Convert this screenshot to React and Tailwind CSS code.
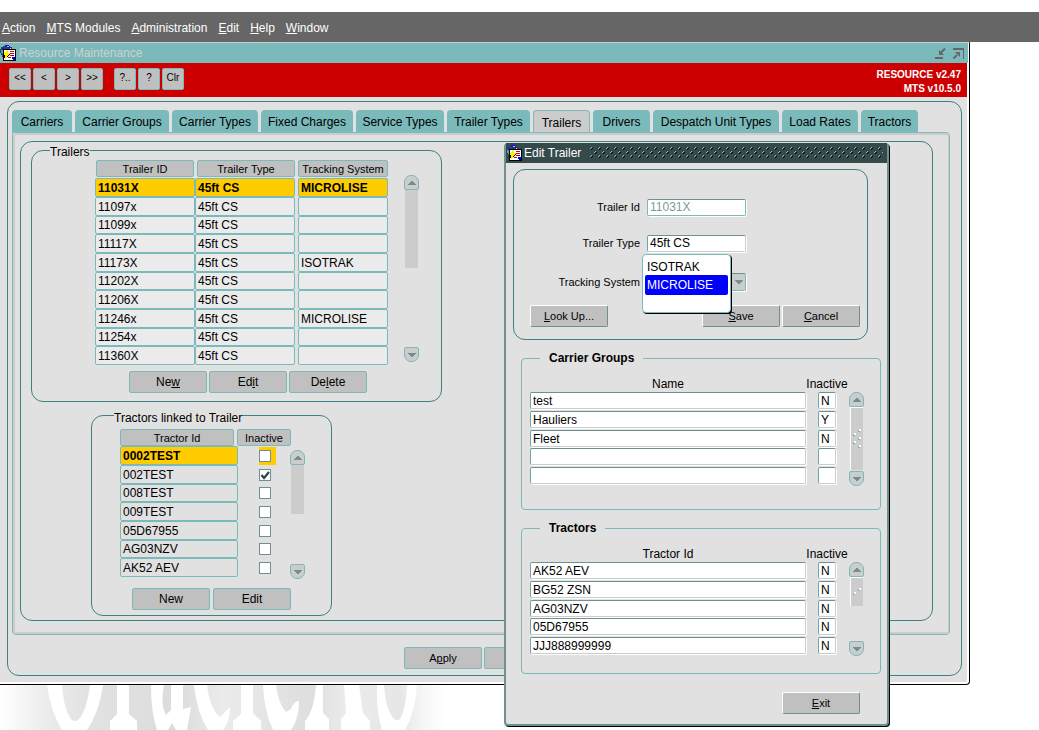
import React from "react";

const TABS = [
  ["Carriers", "w-[60px]"],
  ["Carrier Groups", "w-[94px]"],
  ["Carrier Types", "w-[86px]"],
  ["Fixed Charges", "w-[92px]"],
  ["Service Types", "w-[88px]"],
  ["Trailer Types", "w-[83px]"],
  ["Trailers", "w-[57px]"],
  ["Drivers", "w-[57px]"],
  ["Despatch Unit Types", "w-[126px]"],
  ["Load Rates", "w-[76px]"],
  ["Tractors", "w-[57px]"],
];

const MENUS = [
  ["A", "ction"],
  ["M", "TS Modules"],
  ["A", "dministration"],
  ["E", "dit"],
  ["H", "elp"],
  ["W", "indow"],
];

const TRAILERS = [
  ["11031X", "MICROLISE"],
  ["11097x", ""],
  ["11099x", ""],
  ["11117X", ""],
  ["11173X", "ISOTRAK"],
  ["11202X", ""],
  ["11206X", ""],
  ["11246x", "MICROLISE"],
  ["11254x", ""],
  ["11360X", ""],
];

const LINKED = [
  ["0002TEST", false],
  ["002TEST", true],
  ["008TEST", false],
  ["009TEST", false],
  ["05D67955", false],
  ["AG03NZV", false],
  ["AK52 AEV", false],
];

const GROUPS = [
  ["test", "N"],
  ["Hauliers", "Y"],
  ["Fleet", "N"],
  ["", ""],
  ["", ""],
];

const TRACTORS = [
  ["AK52 AEV", "N"],
  ["BG52 ZSN", "N"],
  ["AG03NZV", "N"],
  ["05D67955", "N"],
  ["JJJ888999999", "N"],
];

function AppIcon() {
  return (
    <svg width="17" height="17" viewBox="0 0 17 17" className="shrink-0" shapeRendering="crispEdges" aria-hidden="true">
      <path d="M3 1h7v1h2v4H4v6H2v-2H1V8H0V4h1V2h2z" fill="#26446e" />
      <path d="M5 0h4v1h1v2H7V2H5zM2 3h2v1h1v2H2z" fill="#1616c8" />
      <path d="M7 1h2v1H7zM10 3h1v1h-1z" fill="#b8d0ff" />
      <path d="M1 5h3v4H2V8H1z" fill="#5f9f86" />
      <path d="M3 4h13v12H3z" fill="#000" />
      <path d="M4 5h11v10H4z" fill="#fff" />
      <path d="M10 6h4v1h-4zM10 8h4v1h-4zM10 10h2v1h-2zM8 12h3v1H8z" fill="#e00000" />
      <path d="M12 10h2v1h-2zM12 12h3v3h-2v-1h-1z" fill="#0000d8" />
      <path d="M7 5h1v3h2v2H9v1H8v1H7v1H6v1H5v-3H4V8h1V7h1V6h1z" fill="#ffee00" />
      <path d="M4 10h1v3H4zM10 9h-1v1H8v1h1v-1h1zM7 12h1v-1H7z" fill="#000" />
    </svg>
  );
}

function FlatButton({ children, className = "", ...rest }) {
  return (
    <button
      type="button"
      className={"h-[22px] w-[78px] rounded-xs border border-[#7ababa] bg-[#c0c0c0] text-center leading-5 " + className}
      {...rest}
    >
      {children}
    </button>
  );
}

function RaisedButton({ children }) {
  return (
    <button
      type="button"
      className="h-[22px] w-[78px] rounded-xs border border-t-white border-l-white border-r-[#6f9090] border-b-[#6f9090] bg-[#c0c0c0] text-center text-[11px] leading-5"
    >
      {children}
    </button>
  );
}

function Arrow({ down }) {
  return (
    <svg width="8" height="4" viewBox="0 0 8 4" shapeRendering="crispEdges" aria-hidden="true">
      <path d={down ? "M0 0h8v1H7v1H6v1H5v1H3V3H2V2H1V1H0z" : "M0 4h8V3H7V2H6V1H5V0H3v1H2v1H1v1H0z"} fill="#6f9090" />
    </svg>
  );
}

function Scroll({ className, thumb, dots = 0 }) {
  return (
    <div className={"flex w-[15px] shrink-0 flex-col items-center " + className}>
      <button type="button" aria-label="Scroll up" className="flex h-[15px] w-[15px] shrink-0 items-center justify-center rounded-t-[7px] rounded-b-xs border border-[#7ababa] bg-[#ccc]">
        <Arrow />
      </button>
      <div className={"flex w-[13px] items-center justify-center bg-[#ccc] " + thumb}>
        {dots > 0 && (
          <svg width="9" height={dots * 4} viewBox={"0 0 9 " + dots * 4} shapeRendering="crispEdges" aria-hidden="true">
            {Array.from({ length: dots }, (_, i) => (
              <g key={i} transform={"translate(" + (i % 2 ? 0 : 5) + " " + i * 4 + ")"}>
                <path d="M1 0h2v2H1z" fill="#fff" />
                <path d="M0 1h1v1h1v1H0z" fill="#7ababa" />
              </g>
            ))}
          </svg>
        )}
      </div>
      <button type="button" aria-label="Scroll down" className="mt-auto flex h-[15px] w-[15px] shrink-0 items-center justify-center rounded-t-xs rounded-b-[7px] border border-[#7ababa] bg-[#ccc]">
        <Arrow down />
      </button>
    </div>
  );
}

function HeadCell({ children, className }) {
  return (
    <div className={"h-[17px] rounded-xs border border-[#7ababa] bg-[#c0c0c0] text-center text-[11px] leading-4 font-normal whitespace-nowrap " + className}>
      {children}
    </div>
  );
}

function TrailersBox() {
  return (
    <fieldset className="-mt-0.5 ml-[10px] w-[411px] rounded-[12px] border border-[#3f8080] pb-2">
      <legend className="ml-[18px] pt-1 leading-4">Trailers</legend>
      <div className="flex pl-[63px]">
        <table className="table-fixed border-separate border-spacing-0">
          <colgroup>
            <col className="w-[100px]" />
            <col className="w-[100px]" />
            <col className="w-[3px]" />
            <col className="w-[90px]" />
          </colgroup>
          <thead>
            <tr>
              <th className="p-0 pb-px"><HeadCell className="mx-px">Trailer ID</HeadCell></th>
              <th className="p-0 pb-px"><HeadCell className="ml-0.5">Trailer Type</HeadCell></th>
              <td />
              <th className="p-0 pb-px"><HeadCell>Tracking System</HeadCell></th>
            </tr>
          </thead>
          <tbody>
            {TRAILERS.map(([id, system], i) => {
              const cell =
                "overflow-hidden rounded-xs border border-[#7ababa] px-0.5 py-0 leading-4 " +
                (i === 0 ? "bg-[#ffcc00] font-bold" : "bg-[#ebebeb]");
              return (
                <tr key={id} className="h-[19px] nth-[3n]:h-[18px]">
                  <td className={cell}>{id}</td>
                  <td className={cell}>45ft CS</td>
                  <td className="p-0" />
                  <td className={cell}>{system}</td>
                </tr>
              );
            })}
          </tbody>
        </table>
        <Scroll className="mt-[15px] mb-[3px] ml-4" thumb="h-[78px]" />
      </div>
      <div className="mt-[6px] ml-[97px] flex gap-0.5">
        <FlatButton>Ne<u>w</u></FlatButton>
        <FlatButton>Ed<u>i</u>t</FlatButton>
        <FlatButton>De<u>l</u>ete</FlatButton>
      </div>
    </fieldset>
  );
}

function LinkedTractorsBox() {
  return (
    <fieldset className="mt-0.5 ml-[70px] w-[241px] rounded-[12px] border border-[#3f8080] pt-[3px] pb-[5px]">
      <legend className="ml-[22px] pt-1.5 leading-4">Tractors linked to Trailer</legend>
      <div className="flex pl-7">
        <table className="w-[170px] table-fixed border-separate border-spacing-0">
          <colgroup>
            <col className="w-[118px]" />
            <col className="w-[52px]" />
          </colgroup>
          <thead>
            <tr>
              <th className="p-0"><HeadCell className="w-[114px]">Tractor Id</HeadCell></th>
              <th className="p-0"><HeadCell className="-ml-px w-[54px]">Inactive</HeadCell></th>
            </tr>
          </thead>
          <tbody>
            {LINKED.map(([id, checked], i) => (
              <tr key={id} className="h-[19px] nth-[3n]:h-[18px]">
                <td className={"rounded-xs border border-[#7ababa] px-0.5 py-0 leading-4 " + (i === 0 ? "bg-[#ffcc00] font-bold" : "")}>{id}</td>
                <td className="py-0 pr-0 pl-[21px]">
                  <div className={"grid h-[18px] w-[17px] items-center justify-start " + (i === 0 ? "bg-[#ffcc00]" : "")}>
                    <input
                      type="checkbox"
                      defaultChecked={checked}
                      aria-label={id + " inactive"}
                      className="peer col-start-1 row-start-1 h-3 w-3 appearance-none border border-[#6f9090] bg-white"
                    />
                    <svg width="12" height="12" viewBox="0 0 12 12" className="pointer-events-none invisible col-start-1 row-start-1 peer-checked:visible" aria-hidden="true">
                      <path d="M2.5 6l2.5 3 5-6" fill="none" stroke="#2f4545" strokeWidth="2.2" />
                    </svg>
                  </div>
                </td>
              </tr>
            ))}
          </tbody>
        </table>
        <Scroll className="mt-[21px] -mb-0.5" thumb="h-[49px]" />
      </div>
      <div className="mt-[11px] ml-10 flex gap-[3px]">
        <FlatButton>New</FlatButton>
        <FlatButton>Edit</FlatButton>
      </div>
    </fieldset>
  );
}

const SUNKEN = "rounded-xs border border-t-[#6f9090] border-l-[#6fa8a8] border-r-[#ccc] border-b-[#ccc] bg-white px-0.5 leading-4 shadow-[1px_1px_0_#fff]";

function DialogList({ title, heading, rows, thumb, dots, className }) {
  return (
    <fieldset className={"ml-[15px] w-[360px] rounded-[4px] border border-[#7ababa] " + className}>
      <legend className="ml-[18px] px-[9px] leading-4 font-bold">{title}</legend>
      <div className="flex pl-2">
        <table className="w-[306px] table-fixed border-separate border-spacing-0">
          <colgroup>
            <col className="w-[276px]" />
            <col className="w-3" />
            <col className="w-[18px]" />
          </colgroup>
          <thead>
            <tr className="h-[15px] leading-[15px]">
              <th className="p-0 font-normal">{heading}</th>
              <td />
              <th className="p-0 font-normal"><div className="-mx-4">Inactive</div></th>
            </tr>
          </thead>
          <tbody>
            {rows.map(([name, flag], i) => (
              <tr key={i} className="h-[19px] nth-[3n]:h-[18px]">
                <td className="p-0 align-top">
                  <input defaultValue={name} aria-label={heading} className={"block h-[17px] w-full " + SUNKEN} />
                </td>
                <td className="p-0" />
                <td className="p-0 align-top">
                  <input defaultValue={flag} aria-label="Inactive" className={"block h-[17px] w-full " + SUNKEN} />
                </td>
              </tr>
            ))}
          </tbody>
        </table>
        <Scroll className="mt-[15px] ml-[13px]" thumb={thumb + " border-t border-l border-t-white border-l-white"} dots={dots} />
      </div>
    </fieldset>
  );
}

function EditTrailerDialog() {
  return (
    <section
      role="dialog"
      aria-label="Edit Trailer"
      className="absolute top-[143px] left-[504px] w-[385px] rounded-[4px] border-x-2 border-b-2 border-[#6f9090] bg-[#e1e1e1] pb-[10px] shadow-[1px_1px_0_#000]"
    >
      <header className="flex h-5 items-center gap-px bg-[#354a4a] text-white">
        <AppIcon />
        <span>Edit Trailer</span>
        <svg height="13" className="mr-1 ml-2 min-w-0 flex-1" shapeRendering="crispEdges" aria-hidden="true">
          <defs>
            <pattern id="grip" width="8" height="8" patternUnits="userSpaceOnUse">
              <path d="M1 0h1v1H1v1H0V1h1zM5 4h1v1H5v1H4V5h1z" fill="#7ababa" />
              <path d="M2 1h1v1H2v1H1V2h1zM6 5h1v1H6v1H5V6h1z" fill="#000" />
            </pattern>
          </defs>
          <rect width="100%" height="12" fill="url(#grip)" />
        </svg>
      </header>

      <form className="mt-[6px] mr-[19px] ml-[7px] rounded-[12px] border border-[#3f8080] pt-7 pb-3">
        <div className="flex h-[18px] items-center gap-[7px]">
          <label htmlFor="trailer-id" className="w-[126px] text-right text-[11px]">Trailer Id</label>
          <input id="trailer-id" readOnly value="11031X" className="h-[17px] w-[99px] rounded-xs border border-[#7ababa] border-t-[#6f9090] bg-white px-0.5 text-[#7f9a9a] shadow-[1px_1px_0_#fff]" />
        </div>
        <div className="mt-[18px] flex h-[18px] items-center gap-[7px]">
          <label htmlFor="trailer-type" className="w-[126px] text-right text-[11px]">Trailer Type</label>
          <input id="trailer-type" defaultValue="45ft CS" className={"h-[17px] w-[99px] " + SUNKEN} />
        </div>
        <div className="mt-[21px] flex h-[18px] items-center gap-[7px]">
          <label htmlFor="tracking" className="w-[126px] text-right text-[11px]">Tracking System</label>
          <div className="relative flex">
            <button id="tracking" type="button" aria-haspopup="listbox" aria-expanded="true" className="flex h-[18px] w-[99px] items-center justify-end rounded-xs border border-[#7ababa] border-t-[#6f9090] bg-[#ccc] pr-0.5 shadow-[1px_1px_0_#fff]">
              <Arrow down />
            </button>
            <ul role="listbox" aria-label="Tracking System" className="absolute -top-[19px] -left-[5px] z-10 h-[59px] w-[89px] rounded-[4px] border border-[#7ababa] bg-white px-0.5 pt-1 shadow-[1px_1px_0_#000]">
              <li role="option" aria-selected="false" className="px-0.5 leading-4">ISOTRAK</li>
              <li role="option" aria-selected="true" className="rounded-xs bg-[#0000ff] px-0.5 leading-5 text-white">MICROLISE</li>
            </ul>
          </div>
        </div>
        <div className="mt-[14px] mr-[7px] ml-4 flex gap-0.5">
          <RaisedButton><u>L</u>ook Up...</RaisedButton>
          <div className="flex-1" />
          <RaisedButton><u>S</u>ave</RaisedButton>
          <RaisedButton><u>C</u>ancel</RaisedButton>
        </div>
      </form>

      <DialogList title="Carrier Groups" heading="Name" rows={GROUPS} thumb="h-[63px]" dots={5} className="mt-[10px] pt-[11px] pb-[23px]" />
      <DialogList title="Tractors" heading="Tractor Id" rows={TRACTORS} thumb="h-[29px]" dots={2} className="mt-[10px] pt-[11px] pb-[17px]" />

      <div className="mt-[18px] mr-[27px] flex justify-end">
        <RaisedButton><u>E</u>xit</RaisedButton>
      </div>
    </section>
  );
}

function Backdrop() {
  return (
    <svg width="460" height="45" viewBox="0 0 460 45" className="block" aria-hidden="true">
      <defs>
        <linearGradient id="fade" gradientUnits="userSpaceOnUse" x1="0" y1="0" x2="445" y2="0">
          <stop offset="0" stopColor="#fff" />
          <stop offset="0.1" stopColor="#ececec" />
          <stop offset="0.2" stopColor="#e2e2e2" />
          <stop offset="0.4" stopColor="#dcdcdc" />
          <stop offset="0.5" stopColor="#ebebeb" />
          <stop offset="0.7" stopColor="#dedede" />
          <stop offset="0.78" stopColor="#ececec" />
          <stop offset="0.9" stopColor="#e6e6e6" />
          <stop offset="0.95" stopColor="#f6f6f6" />
          <stop offset="1" stopColor="#fff" />
        </linearGradient>
      </defs>
      <g fill="url(#fade)">
        <path d="M0 0H47Q51 28 62 45H0z" />
        <path d="M62 0H90Q87 24 79 34Q75 38 71 34Q64 25 62 0z" />
        <path d="M103 0H117V29L110 36V45H87Q99 28 103 0z" />
        <path d="M129 0H151Q151 28 157 45H137V36L129 29z" />
        <path d="M164 0H171V25L166 30Q160 20 164 0z" />
        <path d="M183 0H194Q197 28 208 45H187L191 22L183 24z" />
        <path d="M207 0H241V29L233 36V45H223Q230 36 230 22L220 32Q210 24 207 0z" />
        <path d="M172 38L176 45H168z" />
        <path d="M253 0H263Q264 26 273 45H261V36L253 28z" />
        <path d="M276 0H316Q314 26 305 36V45H291Q299 34 299 16Q294 16 291 24L286 27Q278 18 276 0z" />
        <path d="M323 0H344L346 28L341 34V45H329V34L323 28z" />
        <path d="M359 0H377Q376 26 382 45H370V36L363 28z" />
        <path d="M384 0H407Q406 24 400 34Q397 37 393 33Q385 22 384 0z" />
        <path d="M417 0H445V45H405Q415 28 417 0z" />
      </g>
    </svg>
  );
}

export default function App() {
  return (
    <div className="relative overflow-hidden bg-white pt-3 font-['Liberation_Sans',Arial,sans-serif] text-[12px] leading-4 text-black">
      <nav className="flex h-[30px] items-center gap-[11px] bg-[#666] pt-0.5 pl-0.5 text-white">
        {MENUS.map(([key, rest]) => (
          <button key={key + rest} type="button"><u>{key}</u>{rest}</button>
        ))}
      </nav>

      <main className="mr-[69px] rounded-br-[4px] border-t border-r border-b border-black border-t-[#ccc] pb-0.5">
        <header className="mr-px flex h-5 items-center gap-0.5 bg-[#7ababa] pr-1 text-[#d0d0d0]">
          <AppIcon />
          <span className="flex-1">Resource Maintenance</span>
          <button type="button" aria-label="Minimise" className="mr-[5px]">
            <svg width="11" height="11" viewBox="0 0 11 11" className="block" aria-hidden="true">
              <path d="M0 9h8v2H0z" fill="#666" />
              <path d="M10 .5L5.5 5" stroke="#666" strokeWidth="2" />
              <path d="M4 2v5h5z" fill="#666" />
            </svg>
          </button>
          <button type="button" aria-label="Restore">
            <svg width="11" height="11" viewBox="0 0 11 11" className="block" aria-hidden="true">
              <path d="M0 0h11v11H10V2H0z" fill="#666" />
              <path d="M.5 10.500L4 7" stroke="#666" strokeWidth="2" />
              <path d="M2 4h5v5z" fill="#666" />
            </svg>
          </button>
        </header>

        <div className="mr-0.5 flex h-[34px] justify-between bg-[#cc0000] pr-[6px] pl-[9px]">
          <div className="flex gap-0.5 pt-[5px]">
            {["<<", "<", ">", ">>"].map((t) => (
              <button key={t} type="button" className="h-[22px] w-[22px] rounded-xs border border-[#7ababa] bg-[#c0c0c0] pb-0.5 text-[10px] leading-4">{t}</button>
            ))}
            <div className="w-[7px]" />
            {["?..", "?", "Clr"].map((t) => (
              <button key={t} type="button" className="h-[22px] w-[22px] rounded-xs border border-[#7ababa] bg-[#c0c0c0] pb-0.5 text-[10px] leading-4">{t}</button>
            ))}
          </div>
          <div className="pt-[5px] text-right text-[10px] leading-[14px] font-bold text-white">
            <div>RESOURCE v2.47</div>
            <div>MTS v10.5.0</div>
          </div>
        </div>

        <div className="mr-0.5 bg-[#e1e1e1] pt-1 pr-[5px] pb-[6px] pl-[7px]">
          <div className="rounded-[12px] border border-[#3f8080] pt-2 pr-[11px] pb-[6px] pl-1">
            <div role="tablist" className="flex gap-[3px]">
              {TABS.map(([name, width]) => (
                <button
                  key={name}
                  type="button"
                  role="tab"
                  aria-selected={name === "Trailers"}
                  className={
                    "h-[22px] rounded-t-[4px] pt-0.5 whitespace-nowrap " +
                    width +
                    (name === "Trailers" ? " -mb-px border border-b-0 border-[#7ababa] bg-[#ccc]" : " bg-[#7ababa]")
                  }
                >
                  {name}
                </button>
              ))}
            </div>
            <div className="rounded-[4px] rounded-tl-none border border-[#7ababa]">
              <div className="rounded-[3px] border-2 border-r border-[#ccc] pt-[6px] pr-[15px] pb-[11px] pl-[5px]">
                <div className="rounded-[12px] border border-[#3f8080] pb-1">
                  <TrailersBox />
                  <LinkedTractorsBox />
                </div>
              </div>
            </div>
            <div className="mt-3 ml-[392px] flex gap-0.5">
              <FlatButton className="text-[11px]">A<u>p</u>ply</FlatButton>
              <FlatButton aria-label="Close" />
            </div>
          </div>
        </div>
      </main>

      <Backdrop />
      <EditTrailerDialog />
    </div>
  );
}
